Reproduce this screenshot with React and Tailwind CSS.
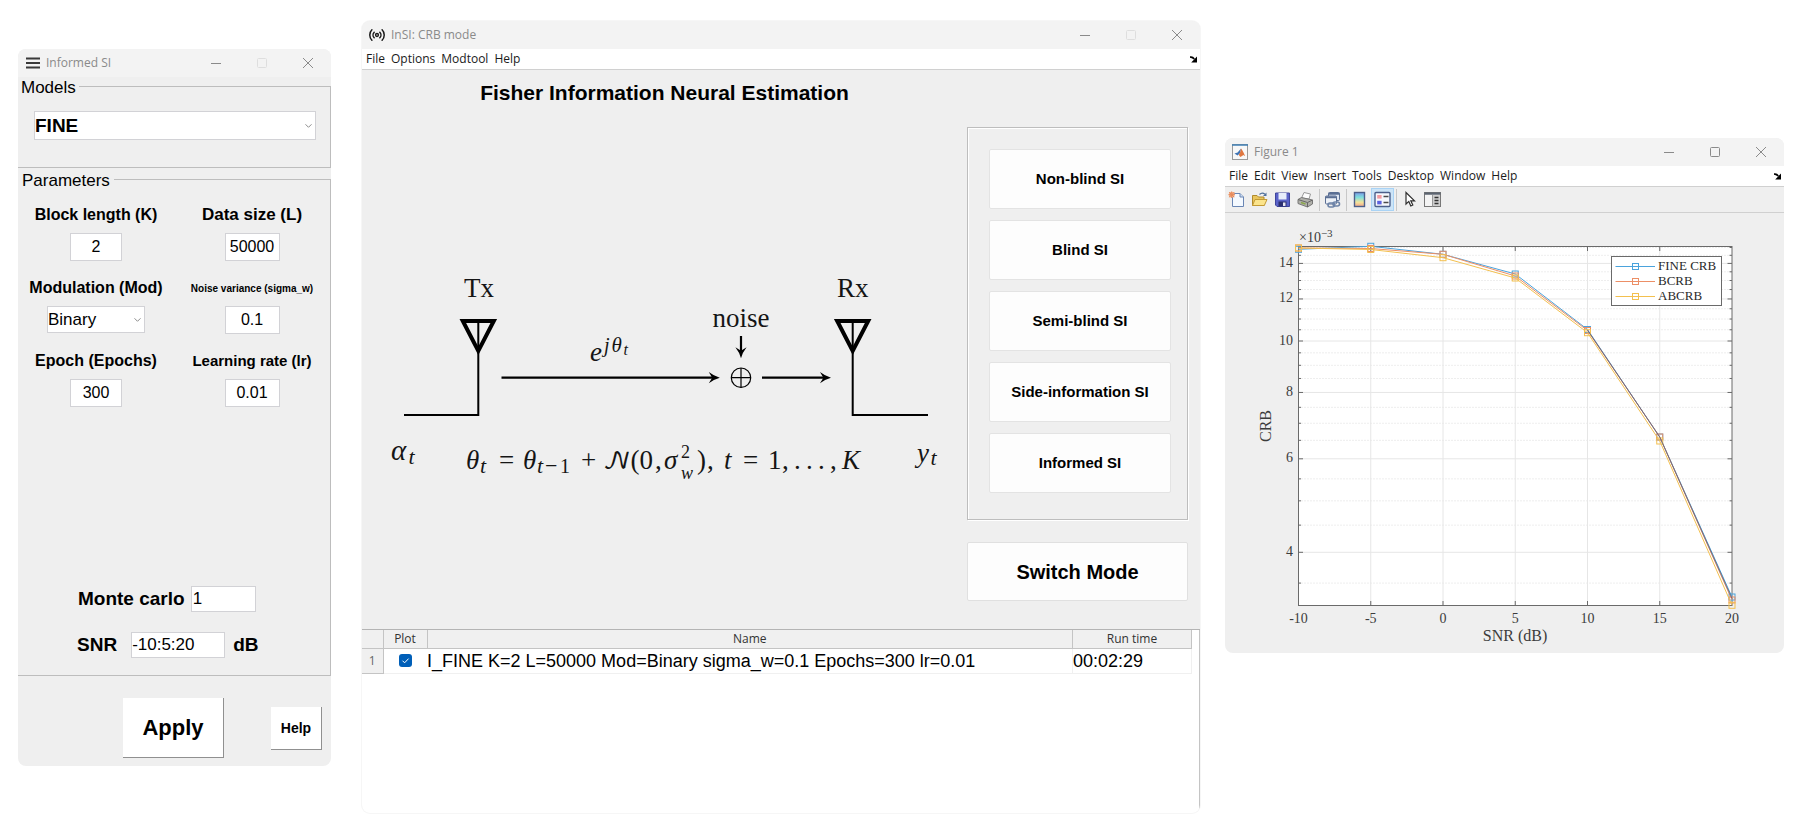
import React from "react";

const UI = "font-['Open_Sans','Noto_Sans',sans-serif]";

function CaptionButtons({ canMaximize = false }) {
  return (
    <div className="flex self-stretch text-[#8a8a8a]">
      <button type="button" aria-label="Minimize" className="flex w-[46px] items-center justify-center">
        <svg width="10" height="10" viewBox="0 0 10 10"><path d="M0 5.5H10" stroke="currentColor" /></svg>
      </button>
      <button
        type="button"
        aria-label="Maximize"
        disabled={!canMaximize}
        className={"flex w-[46px] items-center justify-center " + (canMaximize ? "" : "text-[#dedede]")}
      >
        <svg width="10" height="10" viewBox="0 0 10 10"><rect x="0.5" y="0.5" width="9" height="9" rx="1" fill="none" stroke="currentColor" /></svg>
      </button>
      <button type="button" aria-label="Close" className="flex w-[46px] items-center justify-center">
        <svg width="10" height="10" viewBox="0 0 10 10"><path d="M0 0L10 10M10 0L0 10" stroke="currentColor" /></svg>
      </button>
    </div>
  );
}

function TitleBar({ icon, title, canMaximize }) {
  return (
    <header className={"flex h-7 items-center bg-[#f3f3f3] pl-[7px] " + UI}>
      {icon}
      <h1 className="ml-1.5 grow text-xs text-[#8a8a8a]">{title}</h1>
      <CaptionButtons canMaximize={canMaximize} />
    </header>
  );
}

function MenuBar({ items }) {
  return (
    <nav className={"flex h-[21px] items-center gap-1.5 border-b border-[#d0d0d0] bg-white pl-1 pr-[3px] text-xs text-[#1a1a1a] " + UI}>
      {items.map((m) => (
        <button type="button" key={m}>{m}</button>
      ))}
      <svg className="ml-auto" width="7" height="7" viewBox="0 0 7 7" aria-hidden="true">
        <path d="M0 1.2Q2.5 0.6 4.2 3" fill="none" stroke="#000" strokeWidth="1.8" />
        <path d="M7 0.4V6.4H1.2Z" fill="#000" />
      </svg>
    </nav>
  );
}

function Chevron() {
  return (
    <svg className="pointer-events-none absolute right-1 top-1/2 -translate-y-1/2" width="7" height="5" viewBox="0 0 7 5" aria-hidden="true">
      <path d="M0.5 0.8L3.5 3.8L6.5 0.8" fill="none" stroke="#8c8c8c" />
    </svg>
  );
}

function Dropdown({ id, label, value, className, selectClass }) {
  return (
    <div className={"relative " + className}>
      <select id={id} aria-label={label} defaultValue={value} className={"h-full w-full appearance-none border border-[#d2d2d6] bg-white text-black " + selectClass}>
        <option>{value}</option>
      </select>
      <Chevron />
    </div>
  );
}

const FIELD = "border border-[#d2d2d6] bg-white text-black";

function Param({ id, label, size = "text-base", children, value, width = "w-[52px]" }) {
  return (
    <div className="flex flex-col items-center gap-2">
      <label htmlFor={id} className={"flex h-5 items-center whitespace-nowrap font-bold " + size}>{label}</label>
      {children || <input id={id} defaultValue={value} className={"h-7 text-center text-base " + FIELD + " " + width} />}
    </div>
  );
}

function SettingsWindow() {
  return (
    <section className="mt-[49px] flex flex-[313_1_0%] flex-col overflow-hidden rounded-lg bg-[#efefef] pb-2">
      <TitleBar
        title="Informed SI"
        icon={<svg className="ml-px" width="14" height="12" viewBox="0 0 14 12" aria-hidden="true"><path d="M0 1.5H14M0 6H14M0 10.5H14" stroke="#3a3a3a" strokeWidth="1.8" /></svg>}
      />
      <fieldset className="border border-l-0 border-[#bdbdbd] pb-[27px] pl-4 pr-3.5 pt-[15px]">
        <legend className="-ml-4 px-[3px] pt-[3px] text-[17px] leading-4">Models</legend>
        <Dropdown label="Model" value="FINE" className="h-[29px]" selectClass="text-[19px] font-bold" />
      </fieldset>
      <fieldset className="mt-0.5 border border-l-0 border-[#bdbdbd] pb-[17px] pt-4">
        <legend className="px-1 pt-[3px] text-[17px] leading-4">Parameters</legend>
        <div className="grid grid-cols-2 gap-y-[17px]">
          <Param id="k" label="Block length (K)" value="2" />
          <Param id="l" label="Data size (L)" size="text-[17px]" value="50000" width="w-[55px]" />
          <Param id="mod" label="Modulation (Mod)">
            <Dropdown id="mod" label="Modulation (Mod)" value="Binary" className="h-[27px] w-[98px]" selectClass="text-[17px]" />
          </Param>
          <Param id="sigma" label="Noise variance (sigma_w)" size="text-[10px]" value="0.1" width="w-[55px]" />
          <Param id="epochs" label="Epoch (Epochs)" value="300" />
          <Param id="lr" label="Learning rate (lr)" size="text-[15px]" value="0.01" width="w-[55px]" />
        </div>
        <div className="mt-[179px] flex items-center gap-1.5 pl-[60px]">
          <label htmlFor="mc" className="text-[19px] font-bold leading-6">Monte carlo</label>
          <input id="mc" defaultValue="1" className={"h-[26px] w-[65px] pl-px text-[17px] " + FIELD} />
        </div>
        <div className="mt-5 flex items-center pl-[59px]">
          <label htmlFor="snr" className="text-[19px] font-bold leading-6">SNR</label>
          <input id="snr" defaultValue="-10:5:20" className={"ml-3.5 mr-2 h-[26px] w-[94px] text-[17px] " + FIELD} />
          <span className="text-[19px] font-bold leading-6">dB</span>
        </div>
      </fieldset>
      <div className="flex items-center justify-between pl-[105px] pr-[9px] pt-[22px]">
        <button type="button" className="h-[60px] w-[101px] border-b border-r border-[#909090] bg-white text-[22px] font-bold">Apply</button>
        <button type="button" className="h-[43px] w-[51px] border-b border-r border-[#909090] bg-white text-sm font-bold">Help</button>
      </div>
    </section>
  );
}

function Antenna({ x, feed }) {
  return (
    <g fill="none" stroke="#000">
      <path d={`M${x - 15.5} 321H${x + 15.5}L${x} 351Z`} strokeWidth="4" />
      <path d={`M${x} 321V415H${feed}`} strokeWidth="2" />
    </g>
  );
}

function Head({ x, y, turn = 0 }) {
  return <path transform={`translate(${x} ${y}) rotate(${turn})`} d="M0 0Q-6 -1.6 -11 -5.6L-7.6 0L-11 5.6Q-6 1.6 0 0Z" fill="#000" />;
}

function Diagram() {
  return (
    <svg viewBox="362 107 605 400" className="h-auto w-full font-['Liberation_Serif','Times_New_Roman',serif]" role="img" aria-label="Transmission model">
      <Antenna x={478.3} feed={404} />
      <Antenna x={852.7} feed={928} />
      <g stroke="#000" strokeWidth="2.2" fill="none">
        <path d="M501.5 377.7H714M762 377.7H825M741 336V353" />
        <circle cx="741" cy="377.7" r="9.7" strokeWidth="1.2" />
        <path d="M731.5 377.7H750.5M741 368V387.5" strokeWidth="1.2" />
      </g>
      <Head x={719.8} y={377.7} />
      <Head x={831} y={377.7} />
      <Head x={741} y={358.3} turn={90} />
      <g fontSize="27" fill="#151515">
        <text x="464" y="297">Tx</text>
        <text x="837" y="297">Rx</text>
        <text x="712.5" y="327">noise</text>
      </g>
      <g fontSize="27" fontStyle="italic" fill="#151515">
        <text x="590" y="361">e</text>
        <text x="604" y="352" fontSize="20">j</text>
        <text x="611.5" y="352" fontSize="21">θ</text>
        <text x="623.5" y="355" fontSize="16">t</text>
        <text x="391" y="460" fontSize="29">α</text>
        <text x="408.5" y="463.5" fontSize="22">t</text>
        <text x="917" y="462">y</text>
        <text x="930.5" y="465" fontSize="22">t</text>

        <text x="466" y="469">θ</text>
        <text x="480" y="473" fontSize="22">t</text>
        <text x="499" y="469" fontStyle="normal">=</text>
        <text x="523" y="469">θ</text>
        <text x="537" y="473" fontSize="22">t<tspan x="545" fontStyle="normal">−</tspan><tspan x="560" fontStyle="normal" fontSize="20">1</tspan></text>
        <text x="581" y="469" fontStyle="normal">+</text>
        <text x="603" y="469" fontStyle="normal" fontSize="25" fontFamily="'DejaVu Math TeX Gyre','DejaVu Serif',serif">𝒩</text>
        <text x="630.5" y="469" fontStyle="normal">(<tspan x="639.5">0</tspan><tspan x="655">,</tspan></text>
        <text x="664" y="469">σ</text>
        <text x="681" y="458" fontSize="18" fontStyle="normal">2</text>
        <text x="681" y="479" fontSize="18">w</text>
        <text x="697" y="469" fontStyle="normal">)<tspan x="707">,</tspan></text>
        <text x="724" y="469">t</text>
        <text x="743" y="469" fontStyle="normal">=<tspan x="768">1</tspan><tspan x="782">,</tspan><tspan x="794">.</tspan><tspan x="806">.</tspan><tspan x="818">.</tspan><tspan x="830">,</tspan></text>
        <text x="842" y="469">K</text>
      </g>
    </svg>
  );
}

const MODES = ["Non-blind SI", "Blind SI", "Semi-blind SI", "Side-information SI", "Informed SI"];

function MainWindow() {
  return (
    <section className="ml-[31px] mt-[21px] flex-[838_1_0%] overflow-hidden rounded-lg bg-[#efefef] ring-1 ring-[#f6f6f6]">
      <TitleBar
        title="InSI: CRB mode"
        icon={
          <svg width="16" height="14" viewBox="0 0 16 14" fill="none" stroke="#1c1c1c" strokeWidth="1.5" strokeLinecap="round" aria-hidden="true">
            <circle cx="8" cy="7" r="1.4" />
            <path d="M5.2 4.2A4 4 0 0 0 5.2 9.8M10.8 4.2A4 4 0 0 1 10.8 9.8M2.9 1.8A7.4 7.4 0 0 0 2.9 12.2M13.1 1.8A7.4 7.4 0 0 1 13.1 12.2" />
          </svg>
        }
      />
      <MenuBar items={["File", "Options", "Modtool", "Help"]} />
      <div className="flex pr-3">
        <div className="flex-1 pt-[9px]">
          <h2 className="text-center text-[21px] font-bold leading-7">Fisher Information Neural Estimation</h2>
          <Diagram />
        </div>
        <div className="w-[221px] pb-7 pt-[57px]">
          <div className="border border-[#bdbdbd] pb-[26px] pl-[21px] pr-4 pt-[21px] shadow-[inset_1px_1px_0_#fff,1px_1px_0_#fff]">
            <div className="flex flex-col gap-[11px]">
              {MODES.map((m) => (
                <button type="button" key={m} className="h-[60px] rounded-xs border border-[#e3e3e3] bg-[#fdfdfd] text-[15px] font-bold">{m}</button>
              ))}
            </div>
          </div>
          <button type="button" className="mt-[22px] h-[59px] w-full rounded-xs border border-[#e0e0e0] bg-[#fdfdfd] text-[20px] font-bold">Switch Mode</button>
        </div>
      </div>
      <div className="border-t border-[#b4b4b4] bg-white">
        <div className="min-h-[183px] border-r border-[#c4c4c4] pr-[7px]">
          <table className="w-full table-fixed border-collapse">
            <colgroup>
              <col className="w-[21px]" />
              <col className="w-11" />
              <col />
              <col className="w-[119px]" />
            </colgroup>
            <thead className={"bg-[#f0f0f0] text-xs text-[#333] " + UI}>
              <tr className="h-[18px]">
                <th className="border-b border-r border-[#c4c4c4] p-0"></th>
                <th className="border-b border-r border-[#c4c4c4] p-0 font-normal leading-4">Plot</th>
                <th className="border-b border-r border-[#c4c4c4] p-0 font-normal leading-4">Name</th>
                <th className="border-b border-r border-[#c4c4c4] p-0 font-normal leading-4">Run time</th>
              </tr>
            </thead>
            <tbody>
              <tr className="h-[25px] text-lg">
                <th className={"border-b border-r border-[#c4c4c4] bg-[#f0f0f0] p-0 text-xs font-normal text-[#666] " + UI}>1</th>
                <td className="border-b border-[#f0f0f0] p-0">
                  <label className="relative mx-auto block size-[13px]">
                    <input type="checkbox" defaultChecked aria-label="Plot row 1" className="block size-[13px] appearance-none rounded-[3px] bg-[#005fb8]" />
                    <svg className="pointer-events-none absolute inset-0" width="13" height="13" viewBox="0 0 13 13" aria-hidden="true"><path d="M3.5 6.7L5.6 8.8L9.6 4.6" fill="none" stroke="#fff" /></svg>
                  </label>
                </td>
                <td className="border-b border-r border-[#f0f0f0] p-0 leading-6">I_FINE K=2 L=50000 Mod=Binary sigma_w=0.1 Epochs=300 lr=0.01</td>
                <td className="border-b border-r border-[#f0f0f0] p-0 leading-6">00:02:29</td>
              </tr>
            </tbody>
          </table>
        </div>
      </div>
    </section>
  );
}

const SERIES = [
  { name: "FINE CRB", color: "#4ba3dc", ys: [36.3, 33.3, 41.3, 61, 116.5, 224, 384] },
  { name: "BCRB", color: "#ec8f66", ys: [35, 35.5, 41.3, 63, 117.5, 224, 387] },
  { name: "ABCRB", color: "#f3c04f", ys: [35, 36.5, 44.7, 65, 119.7, 228, 392.3] },
];
const SNRS = [-10, -5, 0, 5, 10, 15, 20];
const MAJOR = [4, 6, 8, 10, 12, 14];
const MINOR = Array.from({ length: 24 }, (_, i) => 3.5 + i / 2).filter((v) => !MAJOR.includes(v) && v < 15.05);
const L = 73.5, R = 507, T = 33.5, B = 392.5;
const px = (s) => L + (s + 10) * 14.45;
const py = (v) => 339.3 - 230.6 * Math.log(v / 4);

function Chart() {
  return (
    <svg viewBox="0 0 559 440" className="block h-auto w-full font-['Liberation_Serif','Times_New_Roman',serif]" role="img" aria-label="CRB against SNR">
      <rect x={L} y={T} width={R - L} height={B - T} fill="#fff" />
      {MINOR.map((v) => (
        <path key={v} d={`M${L} ${py(v)}H${R}`} stroke="#dcdcdc" strokeDasharray="1 2" />
      ))}
      {MAJOR.map((v) => (
        <path key={v} d={`M${L} ${py(v)}H${R}`} stroke="#e6e6e6" />
      ))}
      {SNRS.slice(1, -1).map((s) => (
        <path key={s} d={`M${px(s)} ${T}V${B}`} stroke="#e6e6e6" />
      ))}
      <g stroke="#6a6a6a" fill="none">
        <rect x={L} y={T} width={R - L} height={B - T} />
        {MAJOR.map((v) => (
          <path key={v} d={`M${L} ${py(v)}h4.5M${R} ${py(v)}h-4.5`} />
        ))}
        {MINOR.map((v) => (
          <path key={v} d={`M${L} ${py(v)}h2.5M${R} ${py(v)}h-2.5`} />
        ))}
        {SNRS.slice(1, -1).map((s) => (
          <path key={s} d={`M${px(s)} ${B}v-4.5M${px(s)} ${T}v4.5`} />
        ))}
      </g>
      {SERIES.map((s) => (
        <g key={s.name} stroke={s.color} fill="none">
          <polyline points={s.ys.map((y, i) => `${px(SNRS[i])},${y}`).join(" ")} />
          {s.ys.map((y, i) => (
            <rect key={i} x={px(SNRS[i]) - 3} y={y - 3} width="6" height="6" />
          ))}
        </g>
      ))}
      <path
        d={`M${px(10)} 117L${px(15)} 224L${px(20)} 385.5`}
        stroke="#5c5f78"
        strokeWidth="0.8"
        fill="none"
      />
      <g fontSize="14" fill="#3c3c3c">
        {MAJOR.map((v) => (
          <text key={v} x="68" y={py(v) + 3.5} textAnchor="end">{v}</text>
        ))}
        {SNRS.map((s) => (
          <text key={s} x={px(s)} y="410" textAnchor="middle">{s}</text>
        ))}
        <text x="74" y="29">×10<tspan fontSize="11" dy="-5">−3</tspan></text>
      </g>
      <g fontSize="16" fill="#3c3c3c" textAnchor="middle">
        <text x="290" y="427.5">SNR (dB)</text>
        <text transform="translate(46 213) rotate(-90)">CRB</text>
      </g>
      <rect x="386.5" y="43.5" width="110" height="49" fill="#fff" stroke="#6a6a6a" />
      {SERIES.map((s, i) => (
        <g key={s.name}>
          <g stroke={s.color} fill="none">
            <path d={`M390.5 ${53.5 + i * 15}H430`} />
            <rect x="407.5" y={50.5 + i * 15} width="6" height="6" />
          </g>
          <text x="433" y={57 + i * 15} fontSize="13" fill="#2a2a2a">{s.name}</text>
        </g>
      ))}
    </svg>
  );
}

const ICONS = {
  New: (
    <>
      <path d="M4.5 2.5H12L15.5 6V15.5H4.5Z" fill="#f4f9ff" stroke="#6a86b4" />
      <path d="M12 2.5V6H15.5" fill="#cfdff2" stroke="#6a86b4" />
      <rect x="1" y="1" width="5.4" height="5.4" fill="#f3b08c" />
      <path d="M3.7 0.4V7M0.4 3.7H7M1.3 1.3L6.1 6.1M6.1 1.3L1.3 6.1" stroke="#e58a5c" strokeWidth="1" />
    </>
  ),
  Open: (
    <>
      <path d="M1.5 14.5V4.5H6L7.5 6H13V14.5Z" fill="#e9c55c" stroke="#b08a2c" />
      <path d="M1.5 14.5L4 8.5H16L13.3 14.5Z" fill="#fbe48c" stroke="#c39a34" />
      <path d="M8.5 3.5Q11 0.8 14 3.2" fill="none" stroke="#51719c" strokeWidth="1.2" />
      <path d="M15.5 1.5V5H12Z" fill="#51719c" />
    </>
  ),
  Save: (
    <>
      <path d="M1.5 2H15.5V15.5H3L1.5 14Z" fill="#5a62c8" stroke="#3f459c" />
      <rect x="4.5" y="2" width="8" height="6.5" fill="#e6ecfb" />
      <rect x="4.5" y="10.5" width="8" height="5" fill="#2c3070" />
      <rect x="9" y="11.5" width="2.5" height="3.5" fill="#e6e6f2" />
    </>
  ),
  Print: (
    <>
      <path d="M4.5 7L7 1.5L13.5 3L12 8Z" fill="#fdfdfd" stroke="#9a9a9a" />
      <path d="M1 8.5L4.5 6.5L15.5 9V13L10.5 16L1 12.5Z" fill="#b0b0aa" stroke="#777" />
      <path d="M1 8.5L10.5 11.5L15.5 9M10.5 11.5V16" fill="none" stroke="#666" />
      <path d="M4 11.5L8.5 13" stroke="#8aa64a" strokeWidth="1.4" />
    </>
  ),
  Link: (
    <>
      <rect x="4.5" y="1.5" width="11" height="8" rx="1" fill="#dfe6f2" stroke="#5b6f94" />
      <path d="M4.5 2.7H15.5" stroke="#5b6f94" strokeWidth="2" />
      <rect x="1.5" y="5" width="11" height="8" rx="1" fill="#eef2f8" stroke="#5b6f94" />
      <path d="M1.5 6.2H12.5" stroke="#5b6f94" strokeWidth="2" />
      <rect x="4" y="12" width="6.5" height="4" rx="2" fill="none" stroke="#6e84a8" strokeWidth="1.6" />
      <rect x="9" y="11" width="6.5" height="4" rx="2" fill="none" stroke="#6e84a8" strokeWidth="1.6" />
    </>
  ),
  Colorbar: (
    <>
      <defs>
        <linearGradient id="bar" x1="0" y1="0" x2="0" y2="1">
          <stop offset="0" stopColor="#7b9be8" />
          <stop offset="0.35" stopColor="#7fe0dc" />
          <stop offset="0.7" stopColor="#f4e39a" />
          <stop offset="1" stopColor="#f2a58c" />
        </linearGradient>
      </defs>
      <rect x="3.5" y="1.5" width="10" height="14" fill="url(#bar)" stroke="#4c5f8a" strokeWidth="1.4" />
    </>
  ),
  Legend: (
    <>
      <rect x="1" y="1.5" width="15" height="14" rx="1" fill="#f6f8fd" stroke="#4c5f8a" strokeWidth="1.4" />
      <rect x="3.2" y="4" width="4.4" height="3.6" fill="#f39aa0" />
      <rect x="3.2" y="9.8" width="4.4" height="3.6" fill="#5b62e0" />
      <path d="M9.5 5.5H14.5M9.5 11.5H14.5" stroke="#4a4a4a" strokeWidth="1.6" />
    </>
  ),
  Pointer: <path d="M5 1.5V13L7.8 10.4L9.8 15L11.8 14L9.8 9.8H13.5Z" fill="#fff" stroke="#2e2e2e" strokeWidth="1.2" />,
  Inspector: (
    <>
      <rect x="0.5" y="1.5" width="16" height="14" fill="#f4f4f4" stroke="#777" />
      <path d="M0.5 2.6H16.5" stroke="#5c6470" strokeWidth="2.2" />
      <rect x="9" y="4" width="7" height="11" fill="#cfcfcf" />
      <path d="M10.5 6.5H14.5M10.5 9.5H14.5M10.5 12.5H14.5" stroke="#333" strokeWidth="1.4" />
      <path d="M8.5 4V15.5" stroke="#999" />
    </>
  ),
};

function Tool({ name, active }) {
  return (
    <button
      type="button"
      aria-label={name}
      className={"flex h-[23px] w-[23px] items-center justify-center " + (active ? "border border-[#a9d3f5] bg-[#cce4f7]" : "")}
    >
      <svg className="shrink-0" width="17" height="17" viewBox="0 0 17 17" aria-hidden="true">{ICONS[name]}</svg>
    </button>
  );
}

function Separator() {
  return <span className="ml-0.5 mr-px h-[22px] w-px bg-[#c8c8c8]" />;
}

function FigureWindow() {
  return (
    <section className="ml-[25px] mt-[138px] flex-[559_1_0%] overflow-hidden rounded-lg bg-[#efefef]">
      <TitleBar
        title="Figure 1"
        canMaximize
        icon={
          <svg width="16" height="16" viewBox="0 0 16 16" aria-hidden="true">
            <rect x="0.5" y="0.5" width="15" height="15" fill="#f8f8f8" stroke="#9a9a9a" />
            <path d="M0 1H16" stroke="#3f7fb5" strokeWidth="1.6" />
            <path d="M2.5 9.6L5.6 8.4L9 4.5L8.2 9L5.5 11.6Z" fill="#3f74b4" />
            <path d="M9 4.5Q10.6 6 13.2 12.2L11.5 11L8.4 13L6.8 11Q8.6 9 9 4.5Z" fill="#e0763f" />
          </svg>
        }
      />
      <MenuBar items={["File", "Edit", "View", "Insert", "Tools", "Desktop", "Window", "Help"]} />
      <div className="flex h-[26px] items-center border-b border-[#d0d0d0]">
        <Tool name="New" />
        <Tool name="Open" />
        <Tool name="Save" />
        <Tool name="Print" />
        <Separator />
        <Tool name="Link" />
        <Separator />
        <Tool name="Colorbar" />
        <Tool name="Legend" active />
        <Separator />
        <Tool name="Pointer" />
        <Tool name="Inspector" />
      </div>
      <Chart />
    </section>
  );
}

export default function App() {
  return (
    <main className="flex min-h-screen items-start bg-white pb-5 pl-[18px] pr-[11px] font-['Liberation_Sans',Arial,sans-serif] text-black">
      <SettingsWindow />
      <MainWindow />
      <FigureWindow />
    </main>
  );
}
